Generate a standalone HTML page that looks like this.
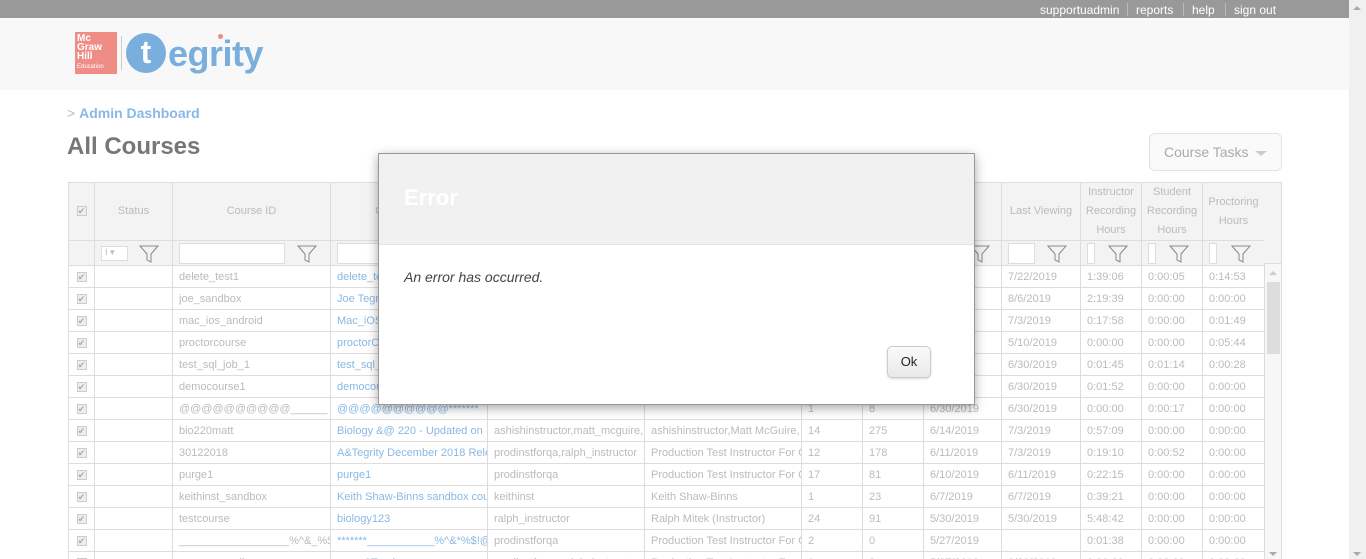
<!DOCTYPE html>
<html><head><meta charset="utf-8">
<style>
*{box-sizing:border-box;margin:0;padding:0}
html,body{width:1366px;height:559px;overflow:hidden}
body{background:#fff;font-family:"Liberation Sans",sans-serif;position:relative}
.top{position:absolute;left:0;top:0;width:1349px;height:18px;background:#999;color:#fff;font-size:12px}
.top span{position:absolute;top:3px}
.top i{position:absolute;top:3px;width:1px;height:13px;background:#bbb}
.hdr{position:absolute;left:0;top:18px;width:1349px;height:72px;background:#f8f8f8}
.vs{position:absolute;left:1349px;top:0;width:17px;height:559px;background:#f0f0f0}
.crumb{position:absolute;left:67px;top:105px;font-size:14px;color:#bbb}
.crumb b{color:#8ab8e6;font-weight:bold}
h1{position:absolute;left:67px;top:133px;font-size:24px;color:#777;font-weight:bold}
.tasks{position:absolute;left:1149px;top:133px;width:133px;height:38px;border:1px solid #e3e3e3;border-radius:6px;background:#fafafa;color:#aaa;font-size:14px;padding:10px 0 0 14px}
.tasks:after{content:"";position:absolute;right:14px;top:17px;border:6px solid transparent;border-top:5px solid #ccc;border-bottom:0}
table{position:absolute;left:68px;top:182px;width:1196px;border-collapse:collapse;table-layout:fixed;font-size:11px;color:#bbb}
td,th{border:1px solid #ddd;height:22px;padding:0 0 0 6px;white-space:nowrap;overflow:hidden;font-weight:normal}
th{background:#f3f3f3;text-align:center;padding:0;line-height:19px;height:57px}
tr.f td{background:#f3f3f3;height:25px;position:relative}
td.l{color:#8ab8e6}
td.c{padding:0;text-align:center}
.cb{display:inline-block;width:10px;height:10px;border:1px solid #ccc;background:#eee;font-size:9px;line-height:8px;color:#aaa;text-align:center}
.inp{position:absolute;top:2px;height:21px;background:#fff;border:1px solid #ddd}
.fn{position:absolute;top:4px}
.sb{position:absolute;left:1264px;top:264px;width:18px;height:295px;background:#f7f7f7;border-left:1px solid #ddd;border-right:1px solid #ddd}
.sb .th{position:absolute;left:2px;top:18px;width:13px;height:72px;background:#ddd}
.sbh{position:absolute;left:1264px;top:182px;width:18px;height:82px;background:#f3f3f3;border:1px solid #ddd;border-left:0}
.modal{position:absolute;left:378px;top:153px;width:597px;height:252px;background:#fff;border:1px solid #999;box-shadow:0 3px 10px rgba(0,0,0,.35)}
.mt{height:91px;background:#f1f1f1;border-bottom:1px solid #e3e3e3;color:#fff;font-weight:bold;font-size:22px;padding:31px 0 0 25px}
.mb{padding:24px 0 0 25px;font-style:italic;font-size:14px;color:#444}
.ok{position:absolute;left:508px;top:192px;width:44px;height:32px;border:1px solid #ccc;border-radius:5px;background:linear-gradient(#fafafa,#e9e9e9);font-size:13px;text-align:center;line-height:29px;color:#222;box-shadow:0 1px 2px rgba(0,0,0,.15)}
</style></head><body>
<div class="top">
<span style="left:1040px">supportuadmin</span><i style="left:1127px"></i>
<span style="left:1136px">reports</span><i style="left:1183px"></i>
<span style="left:1192px">help</span><i style="left:1225px"></i>
<span style="left:1234px">sign out</span>
</div>
<div class="hdr">
<div style="position:absolute;left:75px;top:14px;width:42px;height:42px;background:#f08c86;color:#fff;font-size:10px;line-height:9px;font-weight:bold;padding:2px 0 0 2px">Mc<br>Graw<br>Hill<br><span style="font-size:6px;font-weight:normal">Education</span></div>
<div style="position:absolute;left:121px;top:18px;width:1px;height:34px;background:#ccc"></div>
<div style="position:absolute;left:126px;top:15px;width:40px;height:40px;border-radius:50%;background:#7aaedc;color:#fff;font-size:32px;font-weight:bold;text-align:center;line-height:38px">t</div>
<div style="position:absolute;left:168px;top:15px;color:#7aaedc;font-size:36px;font-weight:bold;letter-spacing:-0.5px">egrity</div>
<div style="position:absolute;left:218px;top:16px;width:5px;height:5px;border-radius:50%;background:#f08c86"></div>
</div>
<div class="vs"><div style="position:absolute;left:4px;top:6px;border:4px solid transparent;border-bottom:4px solid #aaa;border-top:0"></div><div style="position:absolute;left:4px;top:552px;border:4px solid transparent;border-top:4px solid #aaa;border-bottom:0"></div></div>
<div class="crumb">&gt; <b>Admin Dashboard</b></div>
<h1>All Courses</h1>
<div class="tasks">Course Tasks</div>

<table>
<colgroup><col style="width:26px"><col style="width:78px"><col style="width:158px"><col style="width:157px"><col style="width:157px"><col style="width:157px"><col style="width:61px"><col style="width:61px"><col style="width:78px"><col style="width:79px"><col style="width:61px"><col style="width:61px"><col style="width:62px"></colgroup>
<tr><th><span class="cb">✔</span></th><th>Status</th><th>Course ID</th><th>Course Name</th><th></th><th></th><th></th><th></th><th>ng ⇕</th><th>Last Viewing</th><th>Instructor<br>Recording<br>Hours</th><th>Student<br>Recording<br>Hours</th><th>Proctoring<br>Hours</th></tr>
<tr class="f"><td></td>
<td><div class="inp" style="left:6px;width:27px;height:15px;top:5px;font-size:9px;padding-left:3px">I ▾</div><svg class="fn" style="left:44px" width="20" height="18" viewBox="0 0 20 18"><path d="M1 1H19L12 9V17L8 15V9Z" fill="none" stroke="#888"/></svg></td>
<td><div class="inp" style="left:6px;width:106px"></div><svg class="fn" style="left:124px" width="20" height="18" viewBox="0 0 20 18"><path d="M1 1H19L12 9V17L8 15V9Z" fill="none" stroke="#888"/></svg></td>
<td><div class="inp" style="left:6px;width:100px"></div></td><td></td><td></td><td></td><td></td>
<td><svg class="fn" style="left:46px" width="20" height="18" viewBox="0 0 20 18"><path d="M1 1H19L12 9V17L8 15V9Z" fill="none" stroke="#888"/></svg></td>
<td><div class="inp" style="left:6px;width:27px"></div><svg class="fn" style="left:45px" width="20" height="18" viewBox="0 0 20 18"><path d="M1 1H19L12 9V17L8 15V9Z" fill="none" stroke="#888"/></svg></td>
<td><div class="inp" style="left:6px;width:8px"></div><svg class="fn" style="left:27px" width="20" height="18" viewBox="0 0 20 18"><path d="M1 1H19L12 9V17L8 15V9Z" fill="none" stroke="#888"/></svg></td>
<td><div class="inp" style="left:6px;width:8px"></div><svg class="fn" style="left:27px" width="20" height="18" viewBox="0 0 20 18"><path d="M1 1H19L12 9V17L8 15V9Z" fill="none" stroke="#888"/></svg></td>
<td><div class="inp" style="left:6px;width:8px"></div><svg class="fn" style="left:28px" width="20" height="18" viewBox="0 0 20 18"><path d="M1 1H19L12 9V17L8 15V9Z" fill="none" stroke="#888"/></svg></td>
</tr>
<tr><td class="c"><span class="cb">✔</span></td><td></td><td>delete_test1</td><td class="l">delete_test1</td><td></td><td></td><td></td><td></td><td></td><td>7/22/2019</td><td>1:39:06</td><td>0:00:05</td><td>0:14:53</td></tr>
<tr><td class="c"><span class="cb">✔</span></td><td></td><td>joe_sandbox</td><td class="l">Joe Tegrity</td><td></td><td></td><td></td><td></td><td></td><td>8/6/2019</td><td>2:19:39</td><td>0:00:00</td><td>0:00:00</td></tr>
<tr><td class="c"><span class="cb">✔</span></td><td></td><td>mac_ios_android</td><td class="l">Mac_iOS</td><td></td><td></td><td></td><td></td><td></td><td>7/3/2019</td><td>0:17:58</td><td>0:00:00</td><td>0:01:49</td></tr>
<tr><td class="c"><span class="cb">✔</span></td><td></td><td>proctorcourse</td><td class="l">proctorCourse</td><td></td><td></td><td></td><td></td><td></td><td>5/10/2019</td><td>0:00:00</td><td>0:00:00</td><td>0:05:44</td></tr>
<tr><td class="c"><span class="cb">✔</span></td><td></td><td>test_sql_job_1</td><td class="l">test_sql_job</td><td></td><td></td><td></td><td></td><td></td><td>6/30/2019</td><td>0:01:45</td><td>0:01:14</td><td>0:00:28</td></tr>
<tr><td class="c"><span class="cb">✔</span></td><td></td><td>democourse1</td><td class="l">democourse</td><td></td><td></td><td></td><td></td><td></td><td>6/30/2019</td><td>0:01:52</td><td>0:00:00</td><td>0:00:00</td></tr>
<tr><td class="c"><span class="cb">✔</span></td><td></td><td>@@@@@@@@@@______</td><td class="l">@@@@@@@@@@*******</td><td></td><td></td><td>1</td><td>8</td><td>6/30/2019</td><td>6/30/2019</td><td>0:00:00</td><td>0:00:17</td><td>0:00:00</td></tr>
<tr><td class="c"><span class="cb">✔</span></td><td></td><td>bio220matt</td><td class="l">Biology &amp;@ 220 - Updated on</td><td>ashishinstructor,matt_mcguire,</td><td>ashishinstructor,Matt McGuire,</td><td>14</td><td>275</td><td>6/14/2019</td><td>7/3/2019</td><td>0:57:09</td><td>0:00:00</td><td>0:00:00</td></tr>
<tr><td class="c"><span class="cb">✔</span></td><td></td><td>30122018</td><td class="l">A&amp;Tegrity December 2018 Release</td><td>prodinstforqa,ralph_instructor</td><td>Production Test Instructor For Q</td><td>12</td><td>178</td><td>6/11/2019</td><td>7/3/2019</td><td>0:19:10</td><td>0:00:52</td><td>0:00:00</td></tr>
<tr><td class="c"><span class="cb">✔</span></td><td></td><td>purge1</td><td class="l">purge1</td><td>prodinstforqa</td><td>Production Test Instructor For Q</td><td>17</td><td>81</td><td>6/10/2019</td><td>6/11/2019</td><td>0:22:15</td><td>0:00:00</td><td>0:00:00</td></tr>
<tr><td class="c"><span class="cb">✔</span></td><td></td><td>keithinst_sandbox</td><td class="l">Keith Shaw-Binns sandbox course</td><td>keithinst</td><td>Keith Shaw-Binns</td><td>1</td><td>23</td><td>6/7/2019</td><td>6/7/2019</td><td>0:39:21</td><td>0:00:00</td><td>0:00:00</td></tr>
<tr><td class="c"><span class="cb">✔</span></td><td></td><td>testcourse</td><td class="l">biology123</td><td>ralph_instructor</td><td>Ralph Mitek (Instructor)</td><td>24</td><td>91</td><td>5/30/2019</td><td>5/30/2019</td><td>5:48:42</td><td>0:00:00</td><td>0:00:00</td></tr>
<tr><td class="c"><span class="cb">✔</span></td><td></td><td>__________________%^&amp;_%$!</td><td class="l">*******___________%^&amp;*%$!@#</td><td>prodinstforqa</td><td>Production Test Instructor For Q</td><td>2</td><td>0</td><td>5/27/2019</td><td></td><td>0:01:38</td><td>0:00:00</td><td>0:00:00</td></tr>
<tr><td class="c"><span class="cb">✔</span></td><td></td><td>course_sandbox</td><td class="l">cours&amp;Tegrity</td><td>prodinstforqa,ralph_instructor</td><td>Production Test Instructor For Q</td><td>1</td><td>2</td><td>5/27/2019</td><td>6/30/2019</td><td>0:00:00</td><td>0:00:00</td><td>0:00:00</td></tr>
</table>
<div class="sbh"></div>
<div class="sb"><div style="position:absolute;left:4px;top:7px;border:4px solid transparent;border-bottom:4px solid #ccc;border-top:0"></div><div class="th"></div><div style="position:absolute;left:4px;top:288px;border:4px solid transparent;border-top:4px solid #aaa;border-bottom:0"></div></div>

<div class="modal">
<div class="mt">Error</div>
<div class="mb">An error has occurred.</div>
<div class="ok">Ok</div>
</div>
</body></html>
